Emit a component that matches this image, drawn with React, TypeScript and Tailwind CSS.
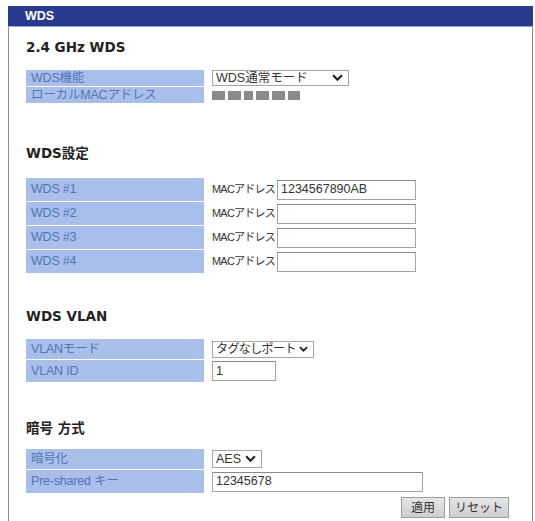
import React from 'react';

const FONT = { fontFamily: '"Liberation Sans", "Noto Sans CJK JP", sans-serif' };
const HEAD_FONT = { fontFamily: '"DejaVu Sans", "Noto Sans CJK JP", sans-serif' };

function Chevron({ size = 10 }: { size?: number }) {
  return (
    <svg width={size} height={size * 0.7} viewBox="0 0 10 7" className="shrink-0">
      <path d="M1 1.2 L5 5.2 L9 1.2" fill="none" stroke="#222" strokeWidth="2" />
    </svg>
  );
}

function Select({ value, width, height, small }: { value: string; width: string; height: string; small?: boolean }) {
  return (
    <div className={`flex items-center justify-between border border-[#a5a5a5] bg-white pl-[3px] pr-[5px] leading-none text-[#333] ${small ? 'text-[12px] tracking-[-0.6px]' : 'text-[12.5px]'} ${width} ${height}`}>
      <span className="whitespace-nowrap">{value}</span>
      <Chevron size={small ? 9 : 11} />
    </div>
  );
}

function TextBox({ value, width, height }: { value?: string; width: string; height: string }) {
  return (
    <div className={`flex items-center border border-[#a5a5a5] border-t-[#8a8a8a] bg-white pl-[3px] text-[12.5px] leading-none text-[#333] ${width} ${height}`}>
      {value}
    </div>
  );
}

function Row({ label, h, children }: { label: string; h: string; children: React.ReactNode }) {
  return (
    <div className={`flex ${h}`}>
      <div className="flex w-[178px] shrink-0 items-center bg-[#a8bfe9] pl-[5px] text-[12.5px] leading-none tracking-[-0.2px] whitespace-nowrap text-[#5274bb]">
        {label}
      </div>
      <div className="flex items-center pl-[8px]">{children}</div>
    </div>
  );
}

function Heading({ children, mt }: { children: React.ReactNode; mt: string }) {
  return (
    <h3 style={HEAD_FONT} className={`${mt} h-[14px] text-[13.5px] leading-[14px] font-bold text-[#222]`}>
      {children}
    </h3>
  );
}

function MacField({ value }: { value?: string }) {
  return (
    <div className="flex items-center">
      <span className="w-[65px] text-[11px] tracking-[-0.8px] whitespace-nowrap text-[#333]">MACアドレス</span>
      <TextBox value={value} width="w-[139px]" height="h-[20px]" />
    </div>
  );
}

// masked (blurred) MAC address
function MaskedMac() {
  const widths = [13, 13, 9, 13, 13, 12];
  return (
    <div className="flex items-center gap-[3px] blur-[0.7px]">
      {widths.map((w, i) => (
        <span key={i} className="h-[9px] bg-[#8a8a8a]" style={{ width: w }} />
      ))}
    </div>
  );
}

export default function App() {
  return (
    <div style={FONT} className="h-[521px] w-[535px] overflow-hidden bg-white pt-[6px]">
      <div className="ml-[8px] flex h-full w-[525px] flex-col border-x border-[#8c8c8c] border-t-0">
        <div className="-mx-px flex h-[21px] items-center border-b border-[#8ea6d9] bg-[#2a3a8f] pl-[17px] text-[12.5px] font-bold text-white">
          WDS
        </div>

        <div className="pl-[17px]">
          {/* 2.4 GHz WDS */}
          <Heading mt="mt-[13px]">2.4 GHz WDS</Heading>
          <div className="mt-[16px] flex flex-col gap-[1px]">
            <Row label="WDS機能" h="h-[16px]">
              <Select value="WDS通常モード" width="w-[137px]" height="h-[16px]" />
            </Row>
            <Row label="ローカルMACアドレス" h="h-[16px]">
              <MaskedMac />
            </Row>
          </div>

          {/* WDS設定 */}
          <Heading mt="mt-[43px]">WDS設定</Heading>
          <div className="mt-[18px] flex flex-col gap-[1px]">
            <Row label="WDS #1" h="h-[23px]">
              <MacField value="1234567890AB" />
            </Row>
            <Row label="WDS #2" h="h-[23px]">
              <MacField />
            </Row>
            <Row label="WDS #3" h="h-[23px]">
              <MacField />
            </Row>
            <Row label="WDS #4" h="h-[23px]">
              <MacField />
            </Row>
          </div>

          {/* WDS VLAN */}
          <Heading mt="mt-[36px]">WDS VLAN</Heading>
          <div className="mt-[16px] flex flex-col gap-[1px]">
            <Row label="VLANモード" h="h-[20px]">
              <Select value="タグなしポート" width="w-[102px]" height="h-[17px]" small />
            </Row>
            <Row label="VLAN ID" h="h-[22px]">
              <TextBox value="1" width="w-[64px]" height="h-[20px]" />
            </Row>
          </div>

          {/* 暗号方式 */}
          <Heading mt="mt-[39px]">暗号 方式</Heading>
          <div className="mt-[14px] flex flex-col gap-[1px]">
            <Row label="暗号化" h="h-[20px]">
              <Select value="AES" width="w-[50px]" height="h-[18px]" />
            </Row>
            <Row label="Pre-shared キー" h="h-[23px]">
              <TextBox value="12345678" width="w-[211px]" height="h-[20px]" />
            </Row>
          </div>
        </div>

        <div className="mt-[4px] mr-[23px] flex justify-end gap-[4px]">
          <button className="h-[21px] w-[44px] border border-[#9e9e9e] bg-gradient-to-b from-[#e6e6e6] to-[#cfcfcf] text-[12px] text-[#333]">
            適用
          </button>
          <button className="h-[21px] w-[60px] border border-[#9e9e9e] bg-gradient-to-b from-[#e6e6e6] to-[#cfcfcf] text-[12px] text-[#333]">
            リセット
          </button>
        </div>
      </div>
    </div>
  );
}
